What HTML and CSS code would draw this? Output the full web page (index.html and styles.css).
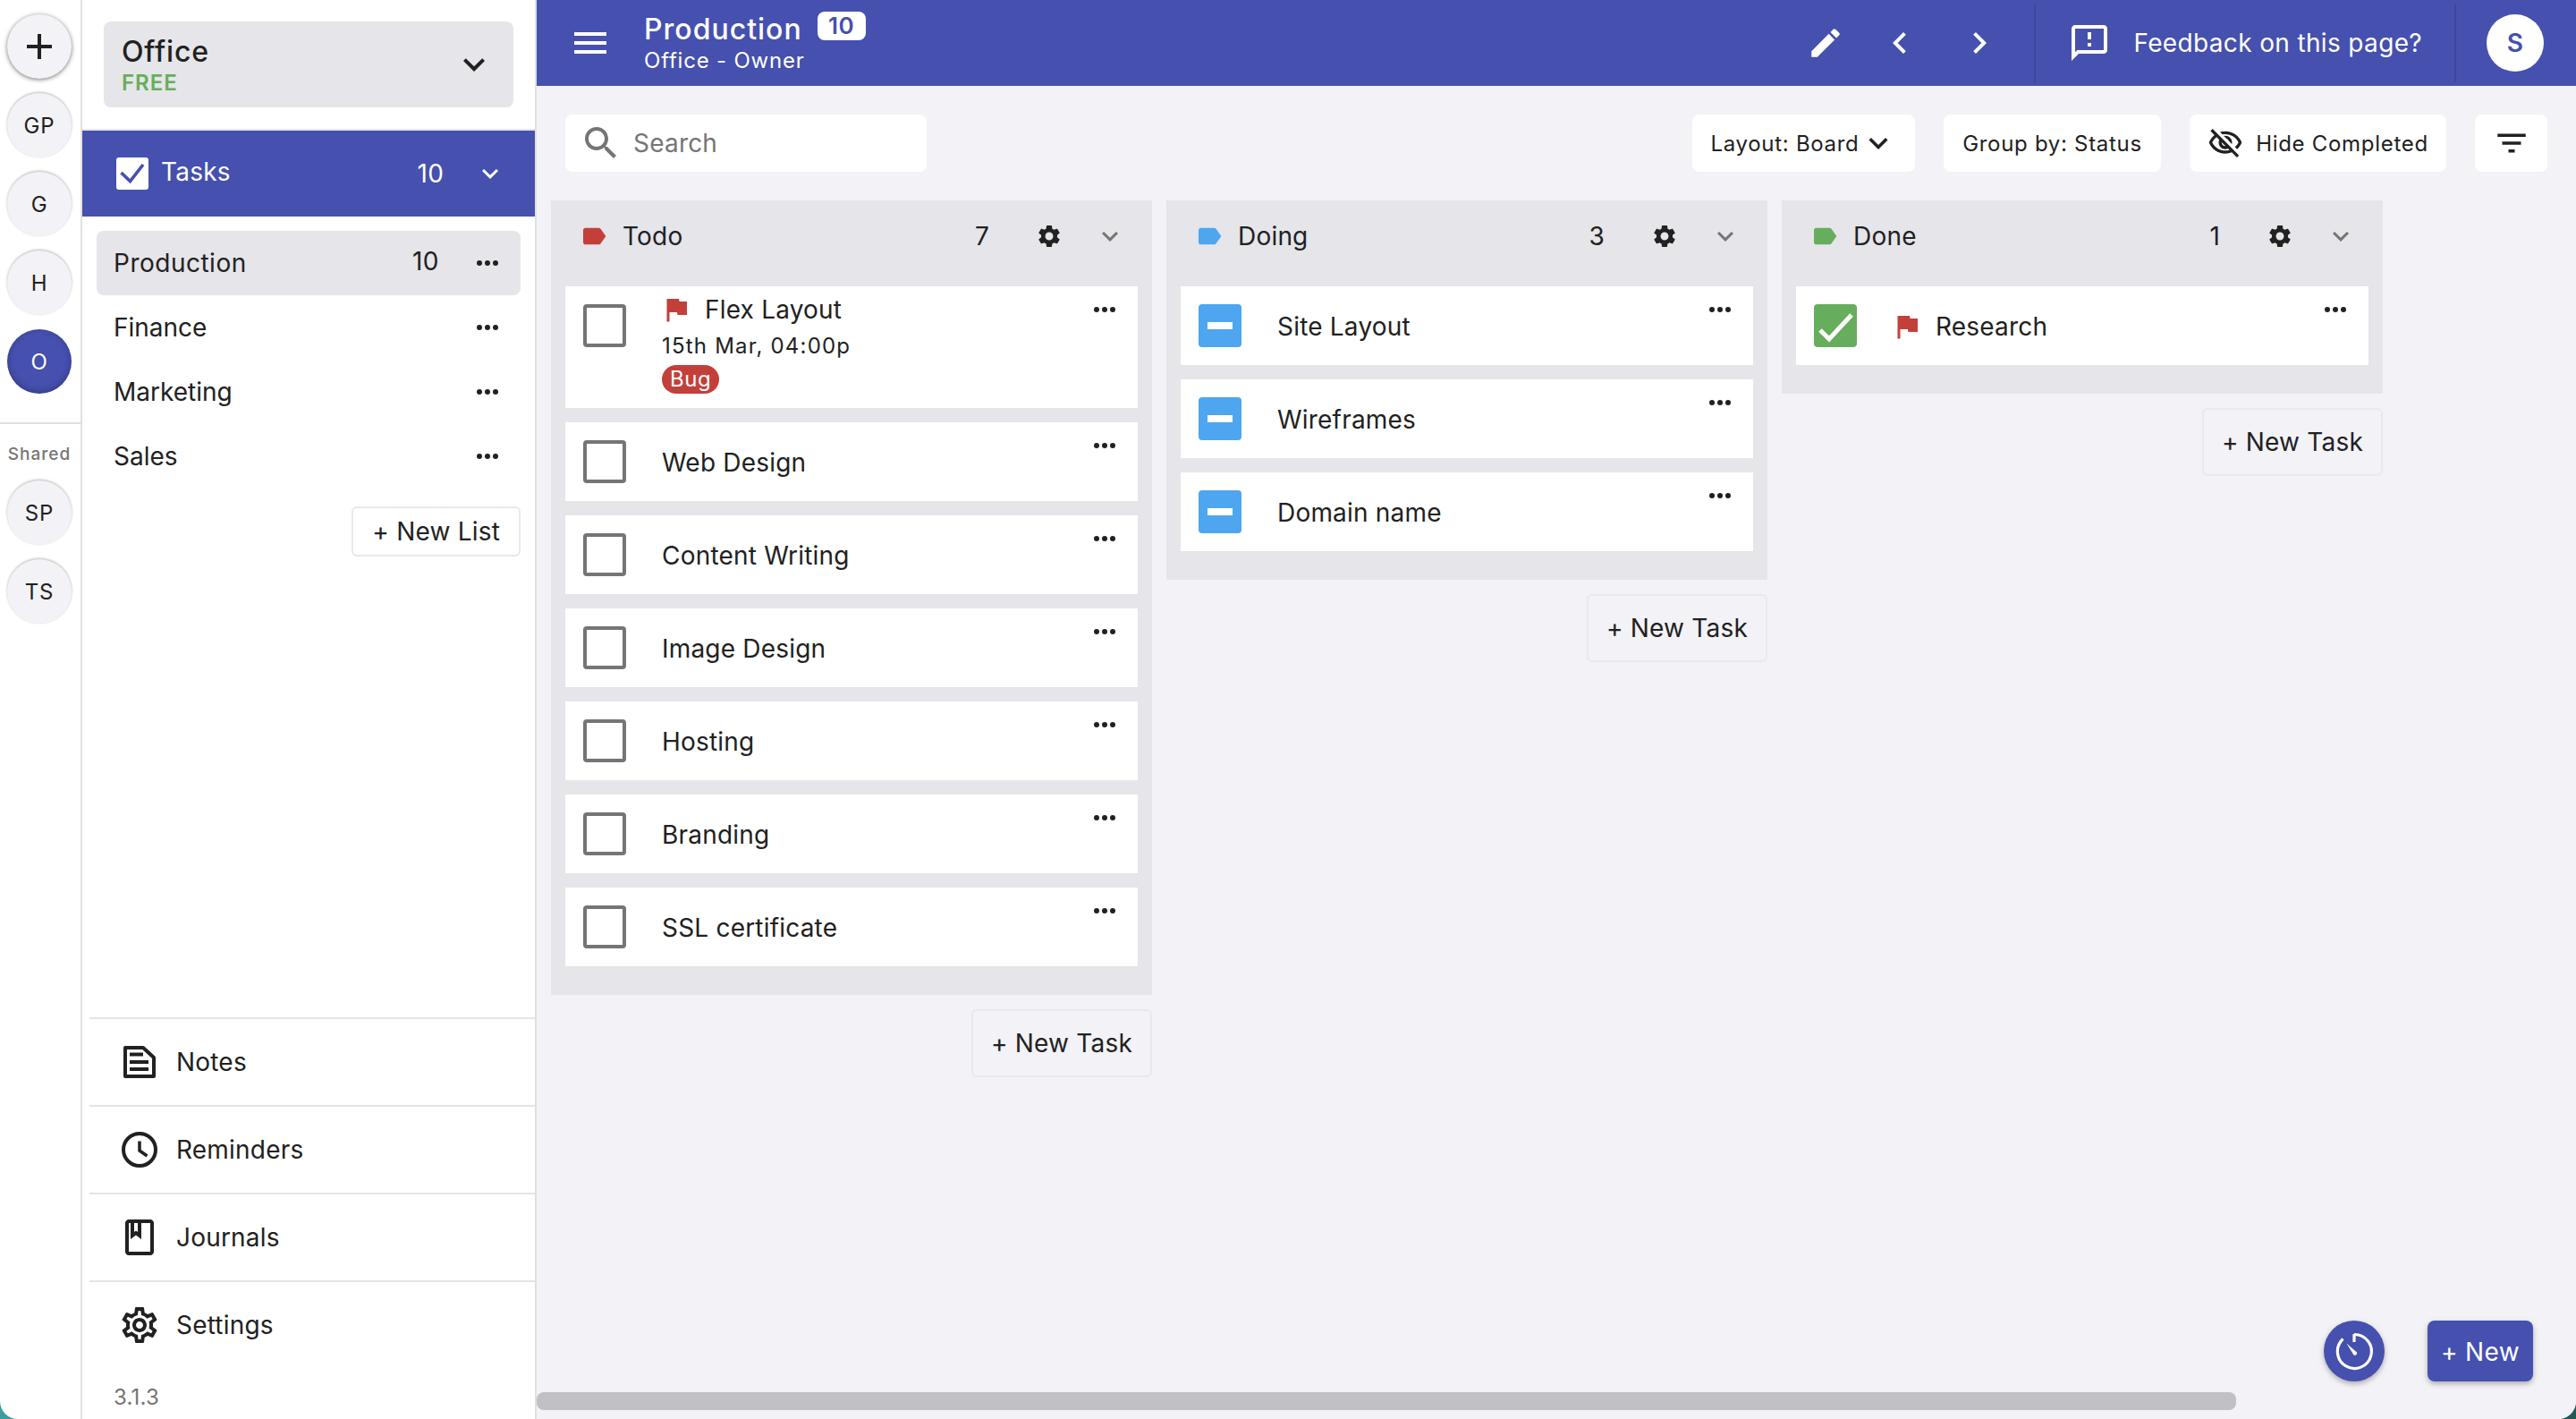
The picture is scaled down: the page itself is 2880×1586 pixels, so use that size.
FILE: index.html
```html
<!DOCTYPE html>
<html>
<head>
<meta charset="UTF-8">
<title>Production</title>
<link rel="stylesheet" href="styles.css">
</head>
<body>
<svg class="defs" width="0" height="0">
  <symbol id="i-expand" viewBox="0 0 24 24"><path d="M16.59 8.59 12 13.17 7.41 8.59 6 10l6 6 6-6z"/></symbol>
  <symbol id="i-dots" viewBox="0 0 24 24"><circle cx="6" cy="12" r="2"/><circle cx="12" cy="12" r="2"/><circle cx="18" cy="12" r="2"/></symbol>
  <symbol id="i-label" viewBox="0 0 24 24"><path d="M17.63 5.84C17.27 5.33 16.67 5 16 5L5 5.01C3.9 5.01 3 5.9 3 7v10c0 1.1.9 1.99 2 1.99L16 19c.67 0 1.27-.33 1.63-.84L22 12l-4.37-6.16z"/></symbol>
  <symbol id="i-gear" viewBox="0 0 24 24"><path d="M19.14 12.94c.04-.3.06-.61.06-.94 0-.32-.02-.64-.07-.94l2.03-1.58c.18-.14.23-.41.12-.61l-1.92-3.32c-.12-.22-.37-.29-.59-.22l-2.39.96c-.5-.38-1.03-.7-1.62-.94l-.36-2.54c-.04-.24-.24-.41-.48-.41h-3.84c-.24 0-.43.17-.47.41l-.36 2.54c-.59.24-1.13.57-1.62.94l-2.39-.96c-.22-.08-.47 0-.59.22L2.74 8.87c-.12.21-.08.47.12.61l2.03 1.58c-.05.3-.09.63-.09.94s.02.64.07.94l-2.03 1.58c-.18.14-.23.41-.12.61l1.92 3.32c.12.22.37.29.59.22l2.39-.96c.5.38 1.03.7 1.62.94l.36 2.54c.05.24.24.41.48.41h3.84c.24 0 .44-.17.47-.41l.36-2.54c.59-.24 1.13-.56 1.62-.94l2.39.96c.22.08.47 0 .59-.22l1.92-3.32c.12-.22.07-.47-.12-.61l-2.01-1.58zM12 15.6c-1.98 0-3.6-1.62-3.6-3.6s1.62-3.6 3.6-3.6 3.6 1.62 3.6 3.6-1.62 3.6-3.6 3.6z"/></symbol>
  <symbol id="i-flag" viewBox="0 0 24 24"><path d="M14.4 6 14 4H5v17h2v-7h5.6l.4 2h7V6z"/></symbol>
</svg>

<div class="app">
  <nav class="rail">
    <div class="circle circle-add">
      <svg class="icon" width="48" height="48" viewBox="0 0 24 24"><path d="M19 13h-6v6h-2v-6H5v-2h6V5h2v6h6v2z"/></svg>
    </div>
    <div class="circle">GP</div>
    <div class="circle">G</div>
    <div class="circle">H</div>
    <div class="circle circle-active">O</div>
    <div class="rail-line"></div>
    <div class="rail-title">Shared</div>
    <div class="circle">SP</div>
    <div class="circle">TS</div>
  </nav>

  <aside class="sidebar">
    <div class="team">
      <div class="team-text">
        <div class="team-name">Office</div>
        <div class="team-plan">FREE</div>
      </div>
      <svg class="icon" width="48" height="48"><use href="#i-expand"/></svg>
    </div>

    <div class="section-head">
      <svg class="tasks-check" width="36" height="36" viewBox="0 0 36 36"><rect width="36" height="36" rx="3" fill="#fff"/><path d="M5.500 17l10 9.500L30 8" fill="none" stroke="#4550af" stroke-width="3.600"/></svg>
      <span class="section-name">Tasks</span>
      <span class="section-count">10</span>
      <svg class="icon" width="36" height="36"><use href="#i-expand"/></svg>
    </div>

    <div class="lists">
      <div class="list-row list-row-active">
        <span class="list-name">Production</span>
        <span class="list-count">10</span>
        <svg class="icon" width="36" height="36"><use href="#i-dots"/></svg>
      </div>
      <div class="list-row">
        <span class="list-name">Finance</span>
        <svg class="icon" width="36" height="36"><use href="#i-dots"/></svg>
      </div>
      <div class="list-row">
        <span class="list-name">Marketing</span>
        <svg class="icon" width="36" height="36"><use href="#i-dots"/></svg>
      </div>
      <div class="list-row">
        <span class="list-name">Sales</span>
        <svg class="icon" width="36" height="36"><use href="#i-dots"/></svg>
      </div>
      <button class="new-list">+ New List</button>
    </div>

    <div class="side-foot">
      <div class="foot-row">
        <svg class="icon" width="48" height="48" viewBox="0 0 48 48"><path d="M8 8h20l12 11v21H8z" fill="none" stroke="#212121" stroke-width="4" stroke-linejoin="round"/><path d="M13 13.500h15v4H13zM13 22h21v4H13zM13 30h21v4H13z"/></svg>
        <span>Notes</span>
      </div>
      <div class="foot-row">
        <svg class="icon" width="48" height="48" viewBox="0 0 48 48"><circle cx="24" cy="24" r="18" fill="none" stroke="#212121" stroke-width="4"/><path d="M24 14.500v10.500l8.500 6" fill="none" stroke="#212121" stroke-width="3.500"/></svg>
        <span>Reminders</span>
      </div>
      <div class="foot-row">
        <svg class="icon" width="48" height="48" viewBox="0 0 24 24"><path d="M18 2H6c-1.100 0-2 .9-2 2v16c0 1.100.9 2 2 2h12c1.100 0 2-.9 2-2V4c0-1.100-.9-2-2-2zM9 4h2v5l-1-.75L9 9V4zm9 16H6V4h1v9l3-2.250L13 13V4h5v16z"/></svg>
        <span>Journals</span>
      </div>
      <div class="foot-row">
        <svg class="icon" width="48" height="48" viewBox="0 0 24 24"><path d="M19.43 12.98c.04-.32.07-.64.07-.98 0-.34-.03-.66-.07-.98l2.11-1.65c.19-.15.24-.42.12-.64l-2-3.46c-.09-.16-.26-.25-.44-.25-.06 0-.12.01-.17.03l-2.49 1c-.52-.4-1.08-.73-1.69-.98l-.38-2.65C14.46 2.18 14.25 2 14 2h-4c-.25 0-.46.18-.49.42l-.38 2.65c-.61.25-1.17.59-1.69.98l-2.49-1c-.06-.02-.12-.03-.18-.03-.17 0-.34.09-.43.25l-2 3.46c-.13.22-.07.49.12.64l2.11 1.65c-.04.32-.07.65-.07.98 0 .33.03.66.07.98l-2.11 1.65c-.19.15-.24.42-.12.64l2 3.46c.09.16.26.25.44.25.06 0 .12-.01.17-.03l2.49-1c.52.4 1.08.73 1.69.98l.38 2.65c.03.24.24.42.49.42h4c.25 0 .46-.18.49-.42l.38-2.65c.61-.25 1.17-.59 1.69-.98l2.49 1c.06.02.12.03.18.03.17 0 .34-.09.43-.25l2-3.46c.12-.22.07-.49-.12-.64l-2.11-1.65zm-1.98-1.71c.04.31.05.52.05.73 0 .21-.02.43-.05.73l-.14 1.13.89.7 1.08.84-.7 1.21-1.27-.51-1.04-.42-.9.68c-.43.32-.84.56-1.25.73l-1.06.43-.16 1.13-.2 1.35h-1.4l-.19-1.35-.16-1.13-1.06-.43c-.43-.18-.83-.41-1.23-.71l-.91-.7-1.06.43-1.27.51-.7-1.21 1.08-.84.89-.7-.14-1.13c-.03-.31-.05-.54-.05-.74s.02-.43.05-.73l.14-1.13-.89-.7-1.08-.84.7-1.21 1.27.51 1.04.42.9-.68c.43-.32.84-.56 1.25-.73l1.06-.43.16-1.13.2-1.35h1.39l.19 1.35.16 1.13 1.06.43c.43.18.83.41 1.23.71l.91.7 1.06-.43 1.27-.51.7 1.21-1.07.85-.89.7.14 1.13zM12 8c-2.21 0-4 1.79-4 4s1.79 4 4 4 4-1.790 4-4-1.79-4-4-4zm0 6c-1.100 0-2-.9-2-2s.9-2 2-2 2 .9 2 2-.9 2-2 2z"/></svg>
        <span>Settings</span>
      </div>
      <div class="version">3.1.3</div>
    </div>
  </aside>

  <main class="main">
    <header class="appbar">
      <svg class="bar-menu" width="48" height="48" viewBox="0 0 24 24"><path d="M3 18h18v-2H3v2zm0-5h18v-2H3v2zm0-7v2h18V6H3z"/></svg>
      <div class="bar-title">
        <div class="bar-name">Production <span class="bar-badge">10</span></div>
        <div class="bar-sub">Office - Owner</div>
      </div>
      <svg class="bar-edit" width="42" height="42" viewBox="0 0 24 24"><path d="M3 17.25V21h3.75L17.81 9.94l-3.75-3.75L3 17.25zM20.71 7.04c.39-.39.39-1.020 0-1.410l-2.340-2.340c-.39-.39-1.020-.39-1.410 0l-1.830 1.830 3.750 3.750 1.830-1.830z"/></svg>
      <svg class="bar-prev" width="48" height="48" viewBox="0 0 24 24"><path d="M15.41 7.41 14 6l-6 6 6 6 1.410-1.410L10.830 12z"/></svg>
      <svg class="bar-next" width="48" height="48" viewBox="0 0 24 24"><path d="M10 6 8.590 7.410 13.170 12l-4.580 4.590L10 18l6-6z"/></svg>
      <div class="bar-feedback">
        <svg width="48" height="48" viewBox="0 0 24 24"><path d="M20 2H4c-1.100 0-1.990.9-1.990 2L2 22l4-4h14c1.100 0 2-.9 2-2V4c0-1.100-.9-2-2-2zm0 14H5.170l-.59.59-.58.58V4h16v12zm-9-4h2v2h-2zm0-6h2v4h-2z"/></svg>
        <span>Feedback on this page?</span>
      </div>
      <div class="bar-user"><div class="bar-avatar">S</div></div>
    </header>

    <div class="toolbar">
      <div class="search">
        <svg width="48" height="48" viewBox="0 0 24 24"><path d="M15.500 14h-.79l-.28-.27C15.410 12.590 16 11.110 16 9.500 16 5.910 13.090 3 9.500 3S3 5.910 3 9.500 5.910 16 9.500 16c1.610 0 3.090-.59 4.230-1.570l.27.28v.79l5 4.990L20.490 19l-4.990-5zm-6 0C7.010 14 5 11.990 5 9.500S7.010 5 9.500 5 14 7.010 14 9.500 11.990 14 9.500 14z"/></svg>
        <span>Search</span>
      </div>
      <div class="tool tool-layout">Layout: Board
        <svg class="icon" width="42" height="42"><use href="#i-expand"/></svg>
      </div>
      <div class="tool tool-group">Group by: Status</div>
      <div class="tool tool-hide">
        <svg class="icon" width="40" height="40" viewBox="0 0 24 24"><path d="M12 6c3.790 0 7.170 2.130 8.820 5.500-.59 1.220-1.420 2.270-2.410 3.120l1.410 1.410c1.390-1.230 2.490-2.770 3.180-4.530C21.270 7.110 17 4 12 4c-1.270 0-2.490.2-3.640.57l1.650 1.650C10.660 6.090 11.320 6 12 6zm-1.070 1.140L13 9.210c.57.25 1.030.71 1.280 1.280l2.070 2.070c.08-.34.14-.7.14-1.070C16.500 9.010 14.480 7 12 7c-.37 0-.72.05-1.070.14zM2.010 3.870l2.680 2.680C3.060 7.830 1.770 9.530 1 11.500 2.730 15.890 7 19 12 19c1.520 0 2.980-.29 4.320-.82l3.420 3.420 1.410-1.410L3.420 2.450 2.010 3.870zm7.500 7.500l2.610 2.610c-.04.01-.08.02-.12.02-1.380 0-2.500-1.120-2.500-2.500 0-.05.01-.08.01-.13zm-3.400-3.400l1.750 1.750c-.23.55-.36 1.150-.36 1.780 0 2.480 2.020 4.500 4.500 4.500.63 0 1.230-.13 1.770-.36l.98.98c-.88.24-1.800.38-2.750.38-3.790 0-7.170-2.130-8.820-5.500.7-1.430 1.720-2.610 2.930-3.530z"/></svg>
        <span>Hide Completed</span>
      </div>
      <div class="tool tool-filter">
        <svg class="icon" width="42" height="42" viewBox="0 0 24 24"><path d="M10 18h4v-2h-4v2zM3 6v2h18V6H3zm3 7h12v-2H6v2z"/></svg>
      </div>
    </div>

    <div class="board">
      <section class="column">
        <div class="col-box">
          <div class="col-head">
            <svg class="tag tag-red" width="32" height="32"><use href="#i-label"/></svg>
            <span class="col-name">Todo</span>
            <span class="col-count">7</span>
            <svg class="icon" width="30" height="30"><use href="#i-gear"/></svg>
            <svg class="col-arrow" width="36" height="36"><use href="#i-expand"/></svg>
          </div>
          <div class="cards">
            <div class="card">
              <div class="check"></div>
              <div class="card-body">
                <div class="card-title"><svg class="flag" width="36" height="36"><use href="#i-flag"/></svg>Flex Layout</div>
                <div class="card-date">15th Mar, 04:00p</div>
                <span class="card-tag">Bug</span>
              </div>
              <svg class="card-more icon" width="36" height="36"><use href="#i-dots"/></svg>
            </div>
            <div class="card"><div class="check"></div><div class="card-body"><div class="card-title">Web Design</div></div><svg class="card-more icon" width="36" height="36"><use href="#i-dots"/></svg></div>
            <div class="card"><div class="check"></div><div class="card-body"><div class="card-title">Content Writing</div></div><svg class="card-more icon" width="36" height="36"><use href="#i-dots"/></svg></div>
            <div class="card"><div class="check"></div><div class="card-body"><div class="card-title">Image Design</div></div><svg class="card-more icon" width="36" height="36"><use href="#i-dots"/></svg></div>
            <div class="card"><div class="check"></div><div class="card-body"><div class="card-title">Hosting</div></div><svg class="card-more icon" width="36" height="36"><use href="#i-dots"/></svg></div>
            <div class="card"><div class="check"></div><div class="card-body"><div class="card-title">Branding</div></div><svg class="card-more icon" width="36" height="36"><use href="#i-dots"/></svg></div>
            <div class="card"><div class="check"></div><div class="card-body"><div class="card-title">SSL certificate</div></div><svg class="card-more icon" width="36" height="36"><use href="#i-dots"/></svg></div>
          </div>
        </div>
        <button class="new-task">+ New Task</button>
      </section>

      <section class="column">
        <div class="col-box">
          <div class="col-head">
            <svg class="tag tag-blue" width="32" height="32"><use href="#i-label"/></svg>
            <span class="col-name">Doing</span>
            <span class="col-count">3</span>
            <svg class="icon" width="30" height="30"><use href="#i-gear"/></svg>
            <svg class="col-arrow" width="36" height="36"><use href="#i-expand"/></svg>
          </div>
          <div class="cards">
            <div class="card"><div class="check check-doing"></div><div class="card-body"><div class="card-title">Site Layout</div></div><svg class="card-more icon" width="36" height="36"><use href="#i-dots"/></svg></div>
            <div class="card"><div class="check check-doing"></div><div class="card-body"><div class="card-title">Wireframes</div></div><svg class="card-more icon" width="36" height="36"><use href="#i-dots"/></svg></div>
            <div class="card"><div class="check check-doing"></div><div class="card-body"><div class="card-title">Domain name</div></div><svg class="card-more icon" width="36" height="36"><use href="#i-dots"/></svg></div>
          </div>
        </div>
        <button class="new-task">+ New Task</button>
      </section>

      <section class="column">
        <div class="col-box">
          <div class="col-head">
            <svg class="tag tag-green" width="32" height="32"><use href="#i-label"/></svg>
            <span class="col-name">Done</span>
            <span class="col-count">1</span>
            <svg class="icon" width="30" height="30"><use href="#i-gear"/></svg>
            <svg class="col-arrow" width="36" height="36"><use href="#i-expand"/></svg>
          </div>
          <div class="cards">
            <div class="card">
              <svg class="check-done" width="48" height="48" viewBox="0 0 48 48"><rect width="48" height="48" rx="3" fill="#66ae5d"/><path d="M7 29l10 10L42 12" fill="none" stroke="#fff" stroke-width="5"/></svg>
              <div class="card-body"><div class="card-title"><svg class="flag" width="36" height="36"><use href="#i-flag"/></svg>Research</div></div>
              <svg class="card-more icon" width="36" height="36"><use href="#i-dots"/></svg>
            </div>
          </div>
        </div>
        <button class="new-task">+ New Task</button>
      </section>
    </div>

    <div class="fab-row">
      <div class="fab-timer">
        <svg width="48" height="48" viewBox="0 0 48 48"><path d="M23 5v9M23 5.500A19 19 0 1 1 10.500 10.500" fill="none" stroke="#fff" stroke-width="3.200" transform="translate(1 0)"/><path d="M15.500 15.500 27 25.500a2.500 2.500 0 0 1-3.500 3z" fill="#fff"/></svg>
      </div>
      <button class="fab-new">+ New</button>
    </div>
    <div class="scroll-thumb"></div>
  </main>
</div>
</body>
</html>
```

FILE: styles.css
```css
* {
  box-sizing: border-box;
}

html, body {
  height: 100%;
  margin: 0;
  overflow: hidden;
}

body {
  background: linear-gradient(90deg, #3c9ea0, #1f5a55);
  font-family: Inter, "Liberation Sans", sans-serif;
  font-size: 28px;
  letter-spacing: .2px;
  color: #212121;
}

button {
  font: inherit;
  letter-spacing: inherit;
  color: inherit;
  cursor: pointer;
}

.defs {
  position: absolute;
}

.icon {
  flex: none;
  fill: #212121;
}

.app {
  display: flex;
  height: 100%;
  background: #fff;
  border-radius: 0 0 20px 20px;
  overflow: hidden;
}

/* left rail */
.rail {
  width: 92px;
  flex: none;
  display: flex;
  flex-direction: column;
  align-items: center;
  gap: 16px;
  padding-top: 16px;
  padding-right: 2px;
  border-right: 2px solid #e0e0e0;
  position: relative;
}

.circle {
  width: 72px;
  height: 72px;
  flex: none;
  display: flex;
  align-items: center;
  justify-content: center;
  border-radius: 50%;
  background: #f2f2f7;
  font-size: 24px;
  letter-spacing: .8px;
  box-shadow: 0 -1px 3px rgba(0, 0, 0, .28);
}

.circle-add {
  box-shadow: 0 1px 5px rgba(0, 0, 0, .55);
}

.circle-active {
  background: #4550af;
  color: #fff;
  box-shadow: inset 0 -2px 7px rgba(0, 0, 0, .28);
}

.rail-line {
  width: 90px;
  height: 2px;
  flex: none;
  margin-top: 16px;
  margin-left: 2px;
  background: #e0e0e0;
}

.rail-title {
  height: 24px;
  line-height: 24px;
  margin-top: 6px;
  margin-bottom: 1px;
  font-size: 19px;
  font-weight: 500;
  letter-spacing: 1px;
  color: #757575;
}

/* sidebar */
.sidebar {
  width: 508px;
  flex: none;
  display: flex;
  flex-direction: column;
  padding-top: 24px;
  border-right: 2px solid #e0e0e0;
}

.team {
  height: 96px;
  margin: 0 24px;
  padding: 0 20px 0 20px;
  display: flex;
  align-items: center;
  justify-content: space-between;
  background: #e5e5ea;
  border-radius: 8px;
}

.team-text {
  padding-top: 2px;
}

.team-name {
  font-size: 32px;
  font-weight: 500;
  line-height: 40px;
  letter-spacing: .8px;
}

.team-plan {
  font-size: 24px;
  font-weight: 600;
  line-height: 30px;
  letter-spacing: 1px;
  color: #66ae5d;
}

.section-head {
  height: 98px;
  margin-top: 24px;
  padding: 0 32px 0 38px;
  display: flex;
  align-items: center;
  border-top: 2px solid #e5e5ea;
  background: #4550af;
  color: #fff;
}

.section-head .icon {
  fill: #fff;
  margin-left: 34px;
}

.tasks-check {
  flex: none;
}

.section-name {
  flex: 1;
  margin-left: 14px;
  margin-bottom: 4px;
}

.lists {
  padding: 16px 16px 0;
  display: flex;
  flex-direction: column;
}

.list-row {
  height: 72px;
  padding: 0 19px;
  display: flex;
  align-items: center;
  border-radius: 8px;
  letter-spacing: 0;
}

.list-row-active {
  background: #e5e5ea;
  letter-spacing: .5px;
}

.list-name {
  flex: 1;
}

.list-count {
  margin-right: 36px;
  margin-bottom: 4px;
}

.new-list {
  align-self: flex-end;
  height: 56px;
  margin-top: 20px;
  padding: 0 21px;
  background: #fff;
  border: 2px solid #e8e8ee;
  border-radius: 6px;
}

.side-foot {
  margin-top: auto;
  margin-left: 8px;
}

.foot-row {
  height: 98px;
  padding-left: 32px;
  display: flex;
  align-items: center;
  gap: 17px;
  border-top: 2px solid #e5e5e5;
}

.version {
  height: 57px;
  padding-left: 27px;
  padding-top: 9px;
  line-height: 48px;
  font-size: 24px;
  color: #757575;
}

/* main area */
.main {
  flex: 1;
  min-width: 0;
  display: flex;
  flex-direction: column;
  background: #f2f2f7;
  position: relative;
}

.appbar {
  height: 96px;
  flex: none;
  display: flex;
  align-items: center;
  padding-left: 36px;
  background: #4550af;
  color: #fff;
}

.appbar svg {
  flex: none;
  fill: #fff;
}

.bar-title {
  margin-left: 36px;
  flex: 1;
}

.bar-name {
  display: flex;
  align-items: center;
  gap: 17px;
  font-size: 32px;
  font-weight: 500;
  line-height: 40px;
  letter-spacing: 1px;
}

.bar-badge {
  height: 32px;
  width: 54px;
  margin-top: -8px;
  border-radius: 8px;
  background: #fff;
  color: #4550af;
  font-size: 26px;
  font-weight: 600;
  line-height: 32px;
  letter-spacing: .5px;
  text-align: center;
}

.bar-sub {
  font-size: 24px;
  line-height: 30px;
  letter-spacing: .8px;
}

.bar-prev {
  margin-left: 38px;
}

.bar-next {
  margin-left: 41px;
}

.bar-feedback {
  height: 88px;
  margin-left: 37px;
  padding: 0 36px;
  display: flex;
  align-items: center;
  gap: 25px;
  letter-spacing: .35px;
  border-left: 2px solid #3d479e;
  border-right: 2px solid #3d479e;
}

.bar-user {
  width: 134px;
  display: flex;
  padding-left: 34px;
}

.bar-avatar {
  width: 64px;
  height: 64px;
  display: flex;
  align-items: center;
  justify-content: center;
  border-radius: 50%;
  background: #fff;
  color: #4550af;
  font-weight: 600;
}

.toolbar {
  flex: none;
  display: flex;
  gap: 32px;
  height: 64px;
  margin-top: 32px;
  padding: 0 32px;
  font-size: 24px;
  letter-spacing: .7px;
}

.search {
  width: 404px;
  margin-right: auto;
  padding-left: 16px;
  display: flex;
  align-items: center;
  gap: 12px;
  background: #fff;
  border-radius: 8px;
  font-size: 28px;
  letter-spacing: .2px;
  color: #757575;
}

.search svg {
  fill: #757575;
}

.tool {
  display: flex;
  align-items: center;
  justify-content: center;
  background: #fff;
  border-radius: 8px;
}

.tool-layout {
  width: 249px;
}

.tool-group {
  width: 243px;
}

.tool-hide {
  width: 287px;
  gap: 14px;
}

.tool-filter {
  width: 81px;
}

.board {
  flex: 1;
  display: flex;
  align-items: flex-start;
  gap: 16px;
  margin-top: 32px;
  padding-left: 16px;
}

.column {
  width: 672px;
  flex: none;
  display: flex;
  flex-direction: column;
  align-items: flex-end;
}

.col-box {
  width: 100%;
  padding-bottom: 32px;
  background: #e5e5ea;
}

.col-head {
  height: 96px;
  padding: 0 29px 16px 32px;
  display: flex;
  align-items: center;
}

.tag-red {
  fill: #c3403a;
}

.tag-blue {
  fill: #4da6ef;
}

.tag-green {
  fill: #66ae5d;
}

.col-name {
  flex: 1;
  margin-left: 16px;
}

.col-count {
  margin-right: 52px;
}

.col-arrow {
  flex: none;
  margin-left: 35px;
  fill: #757575;
}

.cards {
  display: flex;
  flex-direction: column;
  gap: 16px;
  padding: 0 16px;
}

.card {
  min-height: 88px;
  padding-left: 20px;
  display: flex;
  background: #fff;
}

.check, .check-done {
  width: 48px;
  height: 48px;
  flex: none;
  margin-top: 20px;
  border: 4px solid #757575;
  border-radius: 4px;
}

.check-done {
  border: 0;
}

.check-doing {
  border: 0;
  background: #4da6ef;
  display: flex;
  align-items: center;
  justify-content: center;
}

.check-doing::after {
  content: "";
  width: 28px;
  height: 8px;
  background: #fff;
}

.card-body {
  flex: 1;
  margin-left: 40px;
  padding-top: 8px;
}

.card-title {
  min-height: 74px;
  line-height: 36px;
  display: flex;
  align-items: center;
}

.card-body:has(.card-date) {
  padding-bottom: 16px;
}

.card-body:has(.card-date) .card-title {
  min-height: 36px;
}

.flag {
  flex: none;
  margin-left: -2px;
  margin-right: 14px;
  fill: #c3403a;
}

.card-date {
  margin-top: 8px;
  font-size: 24px;
  line-height: 30px;
  letter-spacing: 1.2px;
}

.card-tag {
  display: inline-block;
  height: 32px;
  margin-top: 6px;
  padding: 0 9px;
  border-radius: 16px;
  background: #c3403a;
  color: #fff;
  font-size: 24px;
  line-height: 32px;
  letter-spacing: .6px;
}

.card-more {
  margin-top: 8px;
  margin-right: 19px;
}

.new-task {
  height: 76px;
  margin-top: 16px;
  padding: 0 20px;
  background: #f2f2f7;
  border: 2px solid #e8e8ee;
  border-radius: 6px;
}

/* floating buttons, over the board */
.fab-row {
  position: absolute;
  right: 48px;
  bottom: 42px;
  display: flex;
  gap: 48px;
}

.fab-timer {
  width: 68px;
  height: 68px;
  display: flex;
  align-items: center;
  justify-content: center;
  border-radius: 50%;
  background: #4550af;
  box-shadow: 0 3px 5px rgba(0, 0, 0, .2), 0 2px 10px rgba(0, 0, 0, .1);
}

.fab-new {
  width: 118px;
  height: 68px;
  padding-top: 3px;
  border: 0;
  border-radius: 8px;
  background: #4550af;
  color: #fff;
  font-size: 28px;
  letter-spacing: .4px;
  box-shadow: 0 3px 5px rgba(0, 0, 0, .2), 0 2px 10px rgba(0, 0, 0, .1);
}

.scroll-thumb {
  position: absolute;
  left: 0;
  bottom: 10px;
  width: 1900px;
  height: 20px;
  border-radius: 8px;
  background: #c1c0c5;
}
```
